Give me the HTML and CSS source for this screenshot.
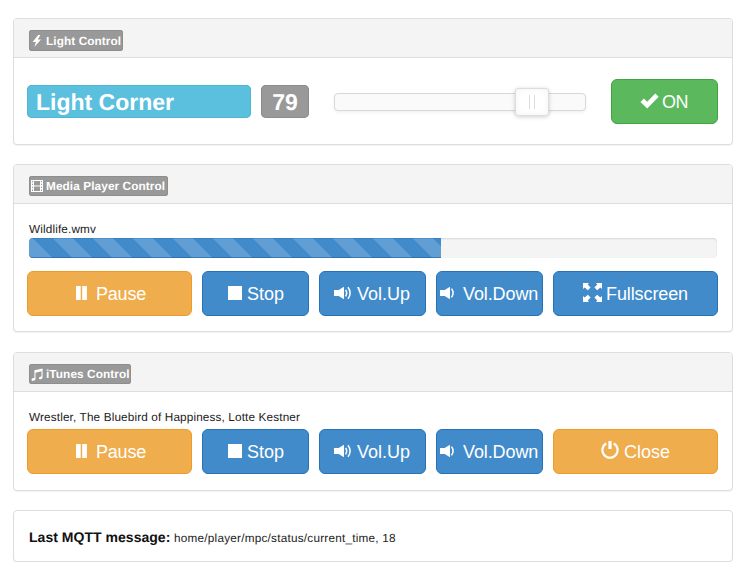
FILE: index.html
```html
<!DOCTYPE html>
<html lang="en">
<head>
<meta charset="utf-8">
<title>Home Control</title>
<link rel="stylesheet" href="styles.css">
</head>
<body>
<svg class="sprite" aria-hidden="true">
  <symbol id="bolt" viewBox="0 0 12 14"><path d="M7.2 1 1.6 8h3.3L3.4 13 10 5.6H6.8L9.4 1z"/></symbol>
  <symbol id="film" viewBox="0 0 12 12"><path fill-rule="evenodd" d="M0 0h12v12H0zM1 1v1.3h1V1zM1 3.7V5h1V3.7zM1 6.8v1.3h1V6.8zM1 9.6V11h1V9.6zM10 1v1.3h1V1zM10 3.7V5h1V3.7zM10 6.8v1.3h1V6.8zM10 9.6V11h1V9.6zM3 1v4.5h6V1zM3 6.5V11h6V6.5z"/></symbol>
  <symbol id="music" viewBox="0 0 12 13"><path d="M3.4 2.2 11.6.4v8.8c0 2.1-3.6 3-3.6 1.1 0-1.2 1.3-2 2.5-1.8V3.3l-6 1.4v6c0 2.1-4 3.1-4 1.1 0-1.3 1.6-2 2.9-1.8z"/></symbol>
  <symbol id="check" viewBox="0 0 19 16"><path d="m.5 9 3.4-3.4 3.2 3.2L15.3.5l3.4 3.3L7.2 15.6z"/></symbol>
  <symbol id="pause" viewBox="0 0 11 14"><path d="M0 0h4.7v14H0zM6.2 0h4.7v14H6.2z"/></symbol>
  <symbol id="stop" viewBox="0 0 14 14"><path d="M0 0h14v14H0z"/></symbol>
  <symbol id="volup" viewBox="0 0 18 14"><path d="M0 4h4.7L10 .7v12.6L4.7 10H0z"/><path class="wave" d="M11.6 3.8q2.2 3.2 0 6.5M14 1.2q4.3 5.8 0 11.6"/></symbol>
  <symbol id="voldown" viewBox="0 0 15 14"><path d="M0 4h4.7L10 .7v12.6L4.7 10H0z"/><path class="wave" d="M11.5 2.6q3.2 4.4 0 8.8"/></symbol>
  <symbol id="full" viewBox="0 0 19 19"><path d="M0 0h6L4.7 1.6 7.6 4.5 4.8 7.3 1.7 4.5 0 6zM19 0h-6l1.3 1.6-2.9 2.9 2.8 2.8 3.1-2.8L19 6zM0 19h6l-1.3-1.6 2.9-2.9-2.8-2.8-3.1 2.8L0 13zM19 19h-6l1.3-1.6-2.9-2.9 2.8-2.8 3.1 2.8L19 13z"/></symbol>
  <symbol id="power" viewBox="0 0 18 18"><path class="ring" d="M5.3 2.5a7.6 7.6 0 1 0 7.4 0"/><path d="M7.4 0h3.2v8H7.4z"/></symbol>
</svg>
<main class="page">
  <section class="panel panel-light">
    <header class="panel-head"><span class="label label-light"><svg class="i-bolt"><use href="#bolt"/></svg><span>Light Control</span></span></header>
    <div class="row row-light">
      <h1 class="name"><span>Light Corner</span></h1>
      <div class="value"><span>79</span></div>
      <div class="slider"><div class="handle"></div></div>
      <button class="btn green on"><svg class="i-check"><use href="#check"/></svg><span>ON</span></button>
    </div>
  </section>

  <section class="panel panel-media">
    <header class="panel-head"><span class="label label-media"><svg class="i-film"><use href="#film"/></svg><span>Media Player Control</span></span></header>
    <p class="track">Wildlife.wmv</p>
    <div class="progress"><div class="bar"></div></div>
    <div class="row buttons">
      <button class="btn orange pause"><svg class="i-pause"><use href="#pause"/></svg><span>Pause</span></button>
      <button class="btn blue stop"><svg class="i-stop"><use href="#stop"/></svg><span>Stop</span></button>
      <button class="btn blue volup"><svg class="i-volup"><use href="#volup"/></svg><span>Vol.Up</span></button>
      <button class="btn blue voldown"><svg class="i-voldown"><use href="#voldown"/></svg><span>Vol.Down</span></button>
      <button class="btn blue full"><svg class="i-full"><use href="#full"/></svg><span>Fullscreen</span></button>
    </div>
  </section>

  <section class="panel panel-itunes">
    <header class="panel-head"><span class="label label-itunes"><svg class="i-music"><use href="#music"/></svg><span>iTunes Control</span></span></header>
    <p class="track">Wrestler, The Bluebird of Happiness, Lotte Kestner</p>
    <div class="row buttons">
      <button class="btn orange pause"><svg class="i-pause"><use href="#pause"/></svg><span>Pause</span></button>
      <button class="btn blue stop"><svg class="i-stop"><use href="#stop"/></svg><span>Stop</span></button>
      <button class="btn blue volup"><svg class="i-volup"><use href="#volup"/></svg><span>Vol.Up</span></button>
      <button class="btn blue voldown"><svg class="i-voldown"><use href="#voldown"/></svg><span>Vol.Down</span></button>
      <button class="btn orange close"><svg class="i-power"><use href="#power"/></svg><span>Close</span></button>
    </div>
  </section>

  <section class="panel message"><strong>Last MQTT message: </strong><span>home/player/mpc/status/current_time, 18</span></section>
</main>
</body>
</html>
```
FILE: styles.css
```css
* { box-sizing: border-box; }
body { margin: 0; background: #fff; color: #222; font-family: "Liberation Sans", Arial, sans-serif; font-size: 11.75px; text-rendering: geometricPrecision; }
svg { fill: currentColor; flex: none; display: block; }
.sprite { position: absolute; width: 0; height: 0; }
.wave, .ring { fill: none; stroke: currentColor; stroke-width: 1.5; }
.ring { stroke-width: 2.2; }
.page { width: 720px; margin-left: 13px; padding-top: 18px; display: flex; flex-direction: column; gap: 20px; }
.panel { border: 1px solid #ddd; border-radius: 4px; box-shadow: 0 1px 1px rgba(0,0,0,.05); background: #fff; }
.panel-light { height: 127px; }
.panel-media { height: 168px; margin-top: -1px; }
.panel-itunes { height: 139px; }
.message { height: 52px; margin-top: -1px; padding: 0 15px; display: flex; align-items: baseline; line-height: 52px; }
.message strong { font-size: 14px; width: 145px; white-space: nowrap; color: #111; letter-spacing: .03px; }
.message span { letter-spacing: .23px; }
.panel-head { height: 39px; padding: 11px 15px 0; background: #f4f4f4; border-bottom: 1px solid #ddd; border-radius: 3px 3px 0 0; }
.label { height: 21px; padding-left: 2px; display: flex; align-items: center; color: #fff; background: #999; border-radius: 3px; font-weight: bold; font-size: 11.8px; line-height: 22px; letter-spacing: .09px; white-space: nowrap; box-shadow: inset 0 0 0 1px #8e8e8e; }
.panel-media .label, .panel-itunes .label { height: 20px; line-height: 20px; }
.label span { margin-left: 3px; }
.label-light { width: 94px; }
.label-media { width: 139px; }
.label-itunes { width: 102px; }
.i-bolt { width: 12px; height: 14px; }
.i-film { width: 12px; height: 12px; }
.i-music { width: 12px; height: 13px; }
.row { display: flex; align-items: center; margin-left: 13px; width: 691px; }
.row-light { height: 87px; }
.name, .value { margin: 0; height: 33px; color: #fff; border-radius: 5px; font-size: 23px; line-height: 35px; font-weight: bold; }
.name { width: 224px; padding-left: 9px; background: #5bc0de; box-shadow: inset 0 0 0 1px #4fb5d3; }
.value { width: 48px; margin-left: 10px; text-align: center; background: #999; box-shadow: inset 0 0 0 1px #8c8c8c; }
.slider { width: 252px; height: 18px; margin-left: 25px; padding-left: 180px; display: flex; align-items: center; background: #fafafa; border: 1px solid #d8d8d8; border-radius: 4px; box-shadow: 0 2px 3px rgba(0,0,0,.05); }
.handle { width: 34px; height: 28px; border: 1px solid #ddd; border-radius: 3px; background: #fff; box-shadow: 0 1px 4px rgba(0,0,0,.18), inset 0 0 6px #f2f2f2; display: flex; align-items: center; justify-content: center; }
.handle::after { content: ""; width: 4px; height: 14px; border: solid #ddd; border-width: 0 1px; }
.btn { appearance: none; margin: 0; padding: 0; height: 45px; border: 1px solid; border-radius: 6px; color: #fff; font: 18px "Liberation Sans", Arial, sans-serif; display: flex; align-items: center; white-space: nowrap; }
.btn span { line-height: 43px; padding-top: 2px; }
.blue { background: #428bca; border-color: #2572b8; }
.orange { background: #f0ad4e; border-color: #ed9c28; }
.green { background: #5cb85c; border-color: #3fa53f; }
.buttons { gap: 10px; }
.track { margin: 0; padding: 18px 15px 0; height: 34px; line-height: 16px; letter-spacing: .14px; }
.panel-itunes .track { height: 37px; }
.progress { margin: 0 15px 13px; height: 20px; background: #f4f4f4; border-radius: 4px; box-shadow: inset 0 1px 2px rgba(0,0,0,.12); overflow: hidden; }
.bar { width: 412px; height: 20px; background: #428bca linear-gradient(45deg, rgba(255,255,255,.16) 25%, transparent 25%, transparent 50%, rgba(255,255,255,.16) 50%, rgba(255,255,255,.16) 75%, transparent 75%) 24px 0 / 40px 40px; box-shadow: inset 0 -1px 0 rgba(20,90,160,.5), inset 0 1px 0 rgba(20,90,160,.2); }
.on { width: 107px; margin-left: auto; padding-left: 28px; }
.on span { margin-left: 3px; letter-spacing: -.4px; }
.i-check { width: 19px; height: 16px; margin-top: -1px; }
.pause { width: 165px; padding-left: 48px; }
.pause span { margin-left: 9px; letter-spacing: -.2px; }
.i-pause { width: 11px; height: 14px; margin-top: -1px; }
.stop { width: 107px; padding-left: 25px; }
.stop span { margin-left: 5px; }
.i-stop { width: 14px; height: 14px; margin-top: -1px; }
.volup { width: 107px; padding-left: 14px; }
.volup span { margin-left: 5px; }
.i-volup { width: 18px; height: 14px; margin-top: -2px; }
.voldown { width: 107px; padding-left: 3px; }
.voldown span { margin-left: 8px; letter-spacing: -.1px; }
.i-voldown { width: 15px; height: 14px; margin-top: -2px; }
.full { width: 165px; padding-left: 29px; }
.full span { margin-left: 4px; letter-spacing: -.1px; }
.i-full { width: 19px; height: 19px; margin-top: -3px; }
.close { width: 165px; padding-left: 47px; }
.close span { margin-left: 5px; }
.i-power { width: 18px; height: 18px; margin-top: -4px; }
```
